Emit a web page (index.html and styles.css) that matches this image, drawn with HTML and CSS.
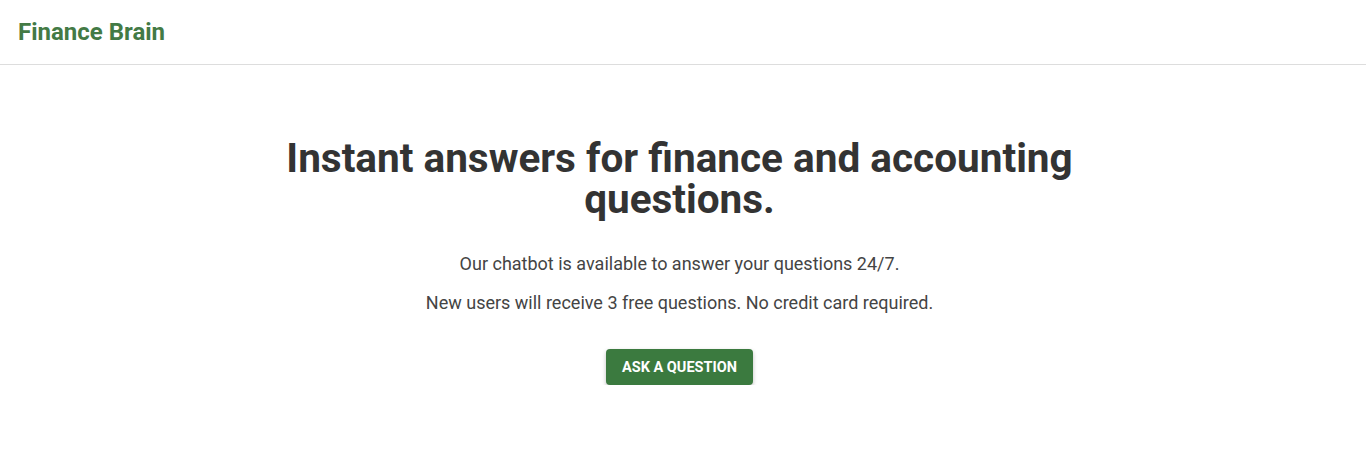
FILE: index.html
```html
<!DOCTYPE html>
<html lang="en">
  <head>
    <meta charset="UTF-8" />
    <meta name="viewport" content="width=device-width, initial-scale=1.0" />
    <title>Finance Brain</title>
    <link rel="stylesheet" href="styles.css">
  </head>
  <body>
    <header class="topbar">
      <a class="logo" href="#">Finance Brain</a>
    </header>
    <main class="hero">
      <h1 class="heroTitle">Instant answers for finance and accounting questions.</h1>
      <p class="heroText">Our chatbot is available to answer your questions 24/7.</p>
      <p class="heroText">New users will receive 3 free questions. No credit card required.</p>
      <button class="askBtn">ASK A QUESTION</button>
    </main>
  </body>
</html>
```

FILE: styles.css
```css
* {
  margin: 0;
  padding: 0;
  box-sizing: border-box;
}

body {
  font-family: Roboto, "Liberation Sans", sans-serif;
  color: #444;
  background: #fff;
}

.topbar {
  height: 65px;
  display: flex;
  align-items: center;
  padding: 0 18px;
  border-bottom: 1px solid #ddd;
}

.logo {
  font-size: 24px;
  font-weight: 700;
  color: #437a45;
  text-decoration: none;
}

.hero {
  display: flex;
  flex-direction: column;
  align-items: center;
  text-align: center;
  padding: 73px 7px 0 0;
}

.heroTitle {
  width: 820px;
  font-size: 40.5px;
  line-height: 41px;
  font-weight: 700;
  color: #333;
}

.heroText {
  font-size: 18px;
  line-height: 24px;
  margin-top: 15px;
}

.heroTitle + .heroText {
  margin-top: 32px;
}

.askBtn {
  margin-top: 34px;
  width: 147px;
  height: 36px;
  border: none;
  border-radius: 4px;
  background: #3b7a3f;
  color: #fff;
  font-family: Roboto, "Liberation Sans", sans-serif;
  font-size: 14.5px;
  font-weight: 700;
  box-shadow: 0 2px 4px rgba(0, 0, 0, 0.25);
  cursor: pointer;
}
```
